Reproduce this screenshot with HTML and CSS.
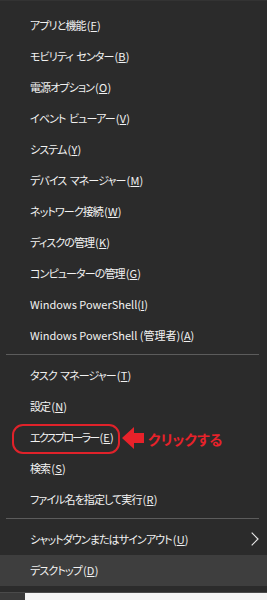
FILE: index.html
```html
<!DOCTYPE html>
<html lang="ja">
<head>
<meta charset="utf-8">
<link rel="stylesheet" href="styles.css">
</head>
<body>
<div class="menu">
  <div class="group">
    <div class="item ja">アプリと機能<span class="key">(<u>F</u>)</span></div>
    <div class="item ja">モビリティ<span class="sp"> </span>センター<span class="key">(<u>B</u>)</span></div>
    <div class="item ja">電源オプション<span class="key">(<u>O</u>)</span></div>
    <div class="item ja">イベント<span class="sp"> </span>ビューアー<span class="key">(<u>V</u>)</span></div>
    <div class="item ja">システム<span class="key">(<u>Y</u>)</span></div>
    <div class="item ja">デバイス<span class="sp"> </span>マネージャー<span class="key">(<u>M</u>)</span></div>
    <div class="item ja">ネットワーク接続<span class="key">(<u>W</u>)</span></div>
    <div class="item ja">ディスクの管理<span class="key">(<u>K</u>)</span></div>
    <div class="item ja">コンピューターの管理<span class="key">(<u>G</u>)</span></div>
    <div class="item">Windows PowerShell(<u>I</u>)</div>
    <div class="item">Windows PowerShell (管理者)(<u>A</u>)</div>
  </div>
  <div class="sep"></div>
  <div class="group">
    <div class="item ja">タスク<span class="sp"> </span>マネージャー<span class="key">(<u>T</u>)</span></div>
    <div class="item ja">設定<span class="key">(<u>N</u>)</span></div>
    <div class="item ja"><span class="narrow">エクスプローラー</span><span class="key">(<u>E</u>)</span>
      <span class="callout-box"></span>
      <svg class="callout-arrow" width="22" height="22" viewBox="0 0 22 22"><polygon points="0,11 12,0 12,6 22,6 22,16 12,16 12,22" fill="#e8222a"/></svg>
      <span class="callout-text">クリックする</span>
    </div>
    <div class="item ja">検索<span class="key">(<u>S</u>)</span></div>
    <div class="item ja">ファイル名を指定して実行<span class="key">(<u>R</u>)</span></div>
  </div>
  <div class="sep"></div>
  <div class="group">
    <div class="item ja">シャットダウンまたはサインアウト<span class="key">(<u>U</u>)</span>
      <svg class="chev" width="8" height="14" viewBox="0 0 8 14"><polyline points="0.7,0.7 7,7 0.7,13.3" fill="none" stroke="#e8e8e8" stroke-width="1.2"/></svg>
    </div>
    <div class="item ja active">デスクトップ<span class="key">(<u>D</u>)</span></div>
  </div>
</div>
<div class="taskbar">
  <div class="tb-left"></div>
  <div class="tb-right"></div>
</div>
</body>
</html>
```
FILE: styles.css
```css
html, body {
  margin: 0;
  padding: 0;
  background: #2b2b2b;
}
body {
  width: 267px;
  height: 600px;
  overflow: hidden;
  font-family: "Noto Sans CJK JP", "Noto Sans", sans-serif;
  font-size: 11px;
  font-feature-settings: "palt";
  color: #f2f2f2;
}
.menu {
  background: #2b2b2b;
  padding: 9px 0 6px;
  border-top: 1px solid #333;
  box-sizing: border-box;
}
.group {
  display: flex;
  flex-direction: column;
}
.item {
  position: relative;
  height: 31px;
  line-height: 31px;
  padding-left: 30px;
  white-space: pre;
}
.item.ja {
  letter-spacing: -0.9px;
}
.item .sp {
  letter-spacing: 1px;
}
.item .narrow {
  letter-spacing: -1.7px;
}
.item .key {
  letter-spacing: 0.2px;
  margin-left: 1px;
}
.item u {
  text-decoration: underline;
  text-underline-offset: 1px;
}
.item.active {
  background: #3e3e3e;
}
.sep {
  height: 1px;
  background: #5c5c5c;
  margin: 3px 8px 5px 6px;
}
.chev {
  position: absolute;
  right: 8px;
  top: 8px;
}
.callout-box {
  position: absolute;
  left: 12px;
  top: 2px;
  width: 104px;
  height: 26px;
  border: 2px solid #e0222a;
  border-radius: 11px;
}
.callout-arrow {
  position: absolute;
  left: 122px;
  top: 5px;
}
.callout-text {
  position: absolute;
  left: 148px;
  top: 0;
  line-height: 34px;
  color: #e8222a;
  font-weight: bold;
  font-size: 14px;
  letter-spacing: 0;
}
.taskbar {
  display: flex;
  height: 9px;
  border-top: 1px solid #4a4a4a;
}
.tb-left {
  width: 25px;
  background: #3a3a3a;
}
.tb-right {
  flex: 1;
  background: #f4f4f4;
}
```
